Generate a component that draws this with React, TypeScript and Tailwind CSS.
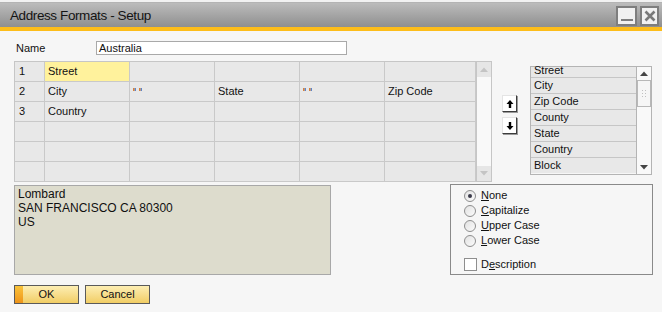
import React from "react";

const gridRows: { n: string; cells: string[] }[] = [
  { n: "1", cells: ["Street", "", "", "", ""] },
  { n: "2", cells: ["City", "q", "State", "q", "Zip Code"] },
  { n: "3", cells: ["Country", "", "", "", ""] },
  { n: "", cells: ["", "", "", "", ""] },
  { n: "", cells: ["", "", "", "", ""] },
  { n: "", cells: ["", "", "", "", ""] },
];

const listItems = ["Street", "City", "Zip Code", "County", "State", "Country", "Block"];

function Quotes() {
  return (
    <span className="flex items-start gap-[3px] pt-[6px] pl-[0px]">
      <span className="flex">
        <span className="w-[1px] h-[3px] bg-[#d8803c]" />
        <span className="w-[1px] h-[3px] bg-[#b89a88]" />
        <span className="w-[1px] h-[3px] bg-[#5d86cc]" />
      </span>
      <span className="flex">
        <span className="w-[1px] h-[3px] bg-[#d8803c]" />
        <span className="w-[1px] h-[3px] bg-[#b89a88]" />
        <span className="w-[1px] h-[3px] bg-[#5d86cc]" />
      </span>
    </span>
  );
}

function Radio({ label, ul, checked }: { label: string; ul: number; checked?: boolean }) {
  return (
    <div className="flex items-center h-[15px]">
      <span className="w-[12px] h-[12px] rounded-full border border-[#8e8e8e] bg-gradient-to-br from-[#e2e2e2] to-[#fbfbfb] flex items-center justify-center">
        {checked && <span className="w-[4px] h-[4px] rounded-full bg-[#3a3a4a]" />}
      </span>
      <span className="ml-[5px] text-[11px] text-[#111]">
        {label.slice(0, ul)}
        <span className="underline underline-offset-[1px]">{label[ul]}</span>
        {label.slice(ul + 1)}
      </span>
    </div>
  );
}

function ArrowBtn({ up }: { up?: boolean }) {
  return (
    <div className="w-[15px] h-[17px] bg-white border-t border-l border-[#e4e4e4] border-r border-b border-r-[#3c3c3c] border-b-[#3c3c3c] shadow-[1px_1px_0_#9a9a9a] flex items-center justify-center">
      <svg width="8" height="10" viewBox="0 0 8 10">
        {up ? (
          <path d="M4 1 L7.5 5 L5.2 5 L5.2 9 L2.8 9 L2.8 5 L0.5 5 Z" fill="#000" />
        ) : (
          <path d="M4 9 L7.5 5 L5.2 5 L5.2 1 L2.8 1 L2.8 5 L0.5 5 Z" fill="#000" />
        )}
      </svg>
    </div>
  );
}

export default function App() {
  return (
    <div className="w-[662px] h-[312px] bg-[#f6f6f6] overflow-hidden font-['Liberation_Sans',Arial,sans-serif] text-[#111]">
      {/* title bar */}
      <div className="h-[2px] bg-[#f2f2f2]" />
      <div className="h-[1px] bg-[#b4b4b4]" />
      <div className="h-[24px] bg-gradient-to-b from-[#bcbcbc] to-[#8f8f8f] flex items-start justify-between pl-[10px] pr-[3px]">
        <span className="text-[13.5px] tracking-[-0.4px] text-[#141414] leading-[24px] pt-[1px]">
          Address Formats - Setup
        </span>
        <div className="flex gap-[3px] pt-[3px]">
          <div className="w-[21px] h-[20px] border-2 border-[#7e7e7e] bg-[#f1f1f1] flex items-end justify-center pb-[2px]">
            <span className="w-[12px] h-[2px] bg-[#7e7e7e] mb-[1px]" />
          </div>
          <div className="w-[19px] h-[20px] border-2 border-[#7e7e7e] bg-[#f1f1f1] flex items-center justify-center">
            <svg width="12" height="12" viewBox="0 0 12 12">
              <path d="M1.5 1.5 L10.5 10.5 M10.5 1.5 L1.5 10.5" stroke="#7a7a7a" strokeWidth="2.6" />
            </svg>
          </div>
        </div>
      </div>
      <div className="h-[4px] bg-[#fdbd1a]" />

      {/* body */}
      <div className="pl-[14px]">
        {/* name row */}
        <div className="flex items-center mt-[10px] h-[14px]">
          <span className="w-[82px] pl-[2px] text-[11px]">Name</span>
          <div className="w-[251px] h-[14px] bg-white border border-[#a9a9a9] text-[11px] leading-[12px] pl-[2px]">
            Australia
          </div>
        </div>

        {/* main row */}
        <div className="flex mt-[6px]">
          {/* grid */}
          <div className="flex">
            <div className="grid grid-cols-[30px_85px_85px_85px_85px_91px] grid-rows-[repeat(6,20px)] border-l border-t border-[#c6c6c6]">
              {gridRows.map((r, ri) => (
                <React.Fragment key={ri}>
                  <div className="border-r border-b border-[#c9c9c9] bg-[#e8e8e8] text-[11px] leading-[19px] pl-[4px]">
                    {r.n}
                  </div>
                  {r.cells.map((c, ci) => (
                    <div
                      key={ci}
                      className={
                        "border-r border-b border-[#c9c9c9] text-[11px] leading-[19px] pl-[3px] " +
                        (ri === 0 && ci === 0 ? "bg-[#fff29c]" : "bg-[#e8e8e8]")
                      }
                    >
                      {c === "q" ? <Quotes /> : c}
                    </div>
                  ))}
                </React.Fragment>
              ))}
            </div>
            <div className="w-[16px] h-[121px] border border-[#c6c6c6] bg-[#f9f9f9] flex flex-col justify-between">
              <div className="w-[14px] h-[15px] bg-[#e6e6e6] flex items-center justify-center">
                <svg width="8" height="5" viewBox="0 0 8 5">
                  <path d="M0 5 L4 0.5 L8 5 Z" fill="#c4c4c4" />
                </svg>
              </div>
              <div className="w-[14px] h-[15px] bg-[#e6e6e6] flex items-center justify-center">
                <svg width="8" height="5" viewBox="0 0 8 5">
                  <path d="M0 0 L4 4.5 L8 0 Z" fill="#c4c4c4" />
                </svg>
              </div>
            </div>
          </div>

          {/* arrows */}
          <div className="flex flex-col ml-[10px] pt-[34px] gap-[5px]">
            <ArrowBtn up />
            <ArrowBtn />
          </div>

          {/* list */}
          <div className="flex ml-[13px] mt-[5px] h-[109px]">
            <div className="w-[106px] border-l border-t border-b border-[#b4b4b4]">
              {listItems.map((it, i) => (
                <div
                  key={it}
                  className={
                    "bg-[#e8e8e8] text-[11px] pl-[3px] " +
                    (i === 0
                      ? "h-[11px] leading-[7px] border-b border-[#c6c6c6]"
                      : i === listItems.length - 1
                      ? "h-[15px] leading-[15px]"
                      : "h-[16px] leading-[15px] border-b border-[#c6c6c6]")
                  }
                >
                  {it}
                </div>
              ))}
            </div>
            <div className="w-[16px] border border-[#b4b4b4] bg-[#f9f9f9] flex flex-col">
              <div className="h-[13px] flex items-center justify-center">
                <svg width="8" height="5" viewBox="0 0 8 5">
                  <path d="M0 5 L4 0.5 L8 5 Z" fill="#454545" />
                </svg>
              </div>
              <div className="h-[27px] border border-[#b8b8b8] bg-[#f6f6f6] flex items-center justify-center">
                <svg width="4" height="7" viewBox="0 0 4 7">
                  <rect x="0" y="0" width="1" height="1" fill="#c0c0c0" />
                  <rect x="3" y="0" width="1" height="1" fill="#c0c0c0" />
                  <rect x="0" y="3" width="1" height="1" fill="#c0c0c0" />
                  <rect x="3" y="3" width="1" height="1" fill="#c0c0c0" />
                  <rect x="0" y="6" width="1" height="1" fill="#c0c0c0" />
                  <rect x="3" y="6" width="1" height="1" fill="#c0c0c0" />
                </svg>
              </div>
              <div className="flex-1" />
              <div className="h-[13px] flex items-center justify-center">
                <svg width="8" height="5" viewBox="0 0 8 5">
                  <path d="M0 0 L4 4.5 L8 0 Z" fill="#454545" />
                </svg>
              </div>
            </div>
          </div>
        </div>

        {/* second row */}
        <div className="flex justify-between w-[639px] mt-[2px]">
          <div className="w-[317px] h-[90px] mt-[1px] bg-[#dddccd] border border-[#a8a8a8] pl-[3px] pt-[1px] text-[12px] leading-[14.2px] text-[#101010]">
            <div>Lombard</div>
            <div>SAN FRANCISCO CA 80300</div>
            <div>US</div>
          </div>
          <div className="w-[203px] h-[91px] border border-[#8a8a8a] pl-[13px] pt-[3px]">
            <Radio label="None" ul={0} checked />
            <Radio label="Capitalize" ul={0} />
            <Radio label="Upper Case" ul={0} />
            <Radio label="Lower Case" ul={0} />
            <div className="flex items-center h-[15px] mt-[9px]">
              <span className="w-[13px] h-[13px] border border-[#8e8e8e] bg-white" />
              <span className="ml-[4px] text-[11px]">
                D<span className="underline underline-offset-[1px]">e</span>scription
              </span>
            </div>
          </div>
        </div>

        {/* buttons */}
        <div className="flex gap-[6px] mt-[10px]">
          <div className="relative w-[65px] h-[19px] border border-[#5a5a5a] bg-gradient-to-b from-[#fdeeb2] to-[#f1cd63] flex items-center justify-center text-[11px]">
            <span className="absolute left-0 top-0 bottom-0 w-[8px] bg-gradient-to-b from-[#f9c33a] to-[#ee9419]" />
            OK
          </div>
          <div className="w-[65px] h-[19px] border border-[#5a5a5a] bg-gradient-to-b from-[#fdeeb2] to-[#f1cd63] flex items-center justify-center text-[11px]">
            Cancel
          </div>
        </div>
      </div>
    </div>
  );
}
